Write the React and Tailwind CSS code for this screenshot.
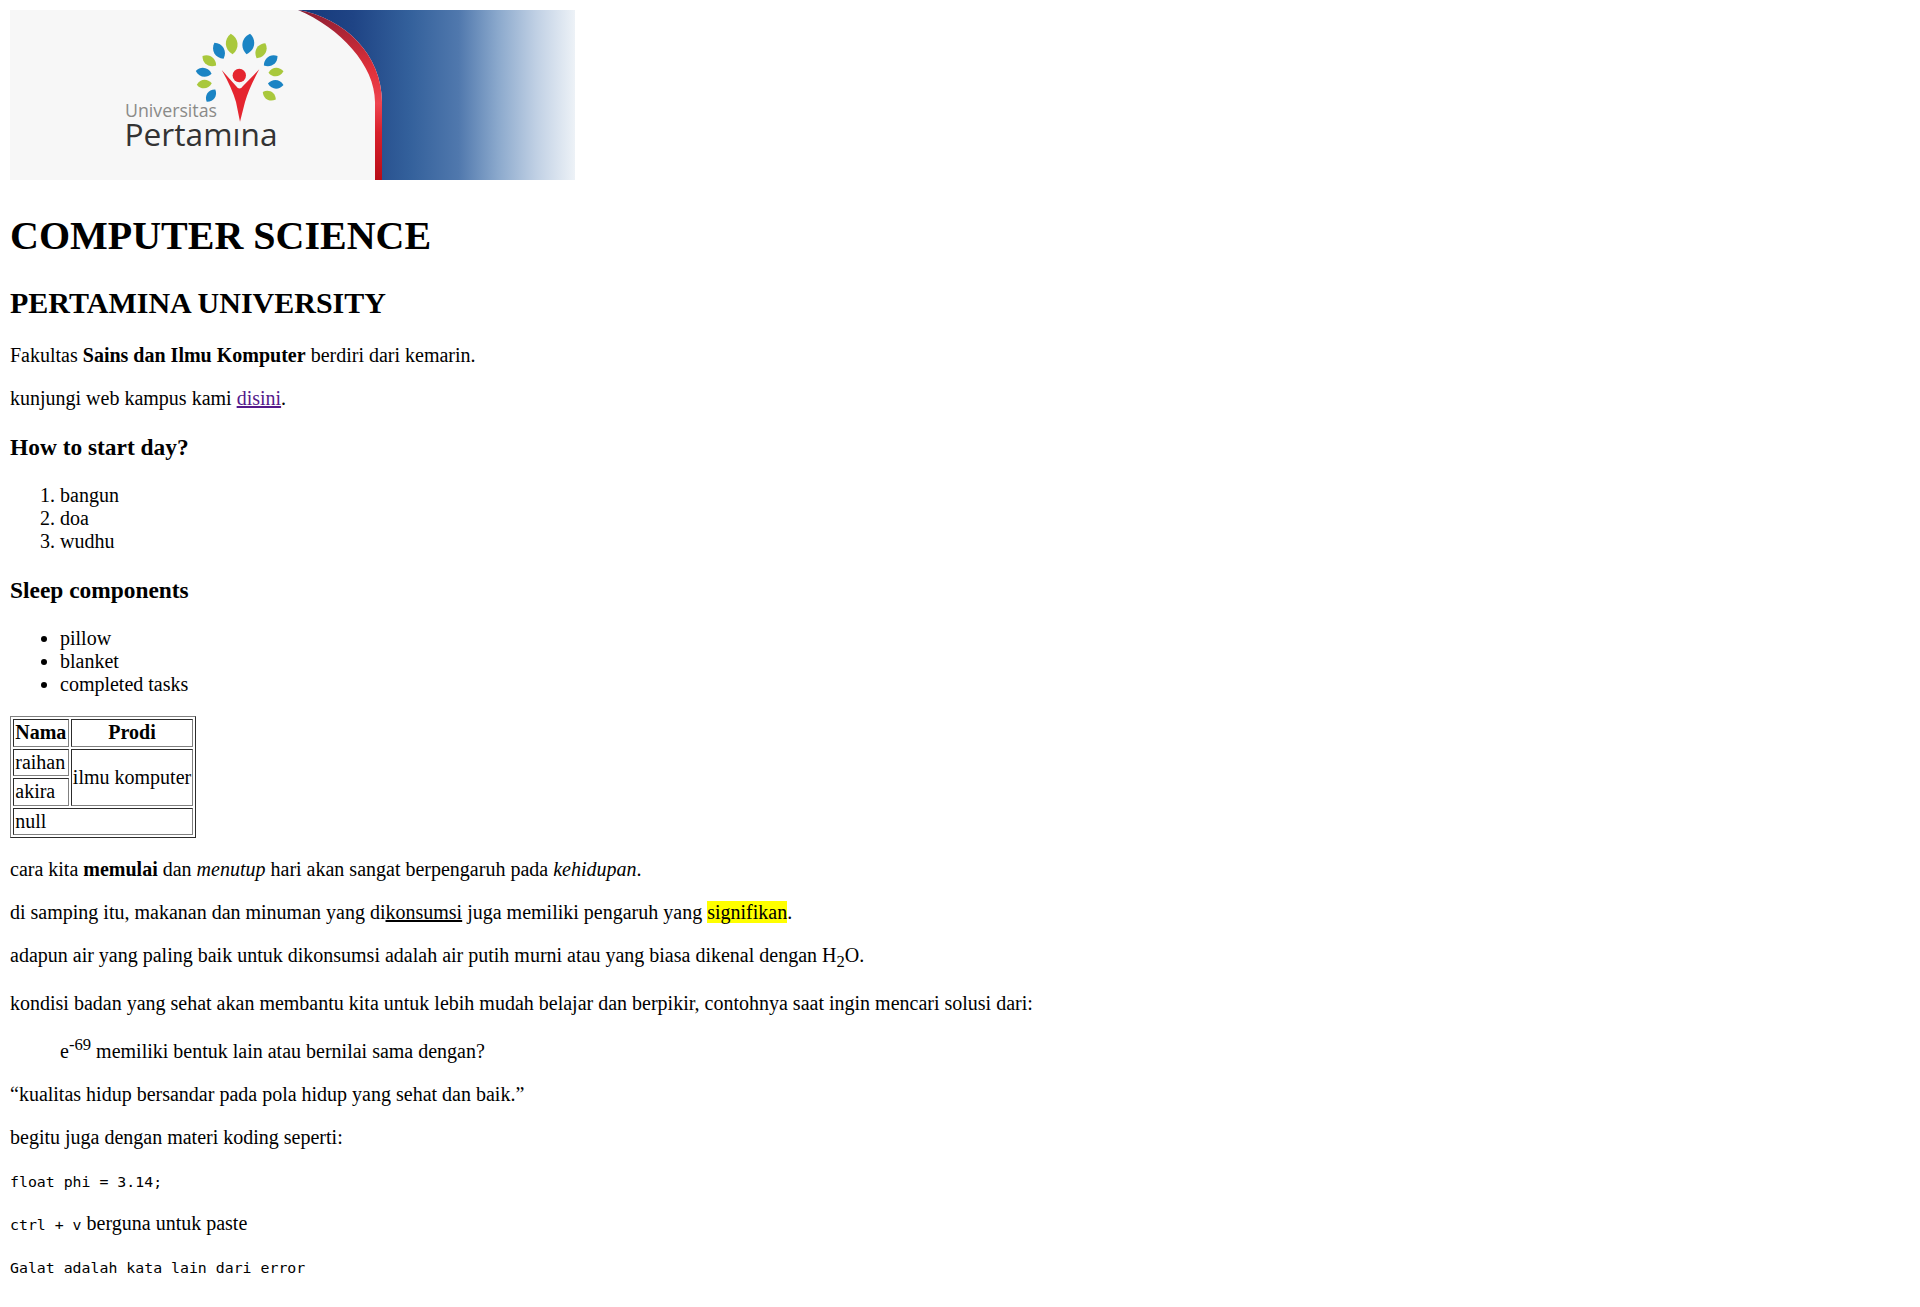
const leaves = [
  { x: 209, y: 40.7, r: -30, c: "#1b84c4", w: 7.1, h: 9.2 },
  { x: 221.7, y: 34, r: -5, c: "#a9c83c", w: 7.8, h: 10.3 },
  { x: 238.3, y: 34, r: 10, c: "#1b84c4", w: 7.8, h: 10.3 },
  { x: 251, y: 40.7, r: 30, c: "#a9c83c", w: 6.7, h: 8.7 },
  { x: 260.7, y: 50.7, r: 55, c: "#1b84c4", w: 6.2, h: 8.3 },
  { x: 266, y: 62, r: 85, c: "#a9c83c", w: 5.8, h: 7.5 },
  { x: 265.7, y: 74.3, r: 95, c: "#1b84c4", w: 5.8, h: 7.8 },
  { x: 259.3, y: 85.7, r: 120, c: "#a9c83c", w: 5.8, h: 7.5 },
  { x: 201, y: 85.7, r: 35, c: "#1b84c4", w: 5.8, h: 7.5 },
  { x: 194.3, y: 74, r: 85, c: "#a9c83c", w: 5.8, h: 7.5 },
  { x: 193.7, y: 62.3, r: 100, c: "#1b84c4", w: 5.8, h: 8 },
  { x: 199.3, y: 50.7, r: 125, c: "#a9c83c", w: 6.2, h: 8.3 },
];

const Banner = () => {
  return (
    <svg viewBox="0 0 565 170" width="565" height="170" className="inline align-baseline">
      <defs>
        <linearGradient id="blue" x1="0" x2="1" y1="0" y2="0">
          <stop offset="0" stopColor="#15387a" />
          <stop offset="0.2" stopColor="#1f4485" />
          <stop offset="0.4" stopColor="#33609b" />
          <stop offset="0.58" stopColor="#5078ad" />
          <stop offset="0.72" stopColor="#8aa8cc" />
          <stop offset="0.86" stopColor="#c0d0e4" />
          <stop offset="1" stopColor="#edf2f7" />
        </linearGradient>
        <linearGradient id="red" x1="0" x2="0" y1="0" y2="1">
          <stop offset="0" stopColor="#8e1e33" />
          <stop offset="0.35" stopColor="#e0303a" />
          <stop offset="0.55" stopColor="#ee4450" />
          <stop offset="0.72" stopColor="#d8202c" />
          <stop offset="1" stopColor="#b80d18" />
        </linearGradient>
      </defs>
      <rect width="565" height="170" fill="#f7f7f7" />
      <path d="M288 0H565V170H372V92C372 45 335 8 288 0Z" fill="url(#blue)" />
      <path d="M288 0C335 8 372 45 372 92V170H365V92C365 55 330 18 288 0Z" fill="url(#red)" />
      {leaves.map((l, i) => (
        <path
          key={i}
          d={`M0 ${-l.h}C${l.w} ${-l.h * 0.5} ${l.w} ${l.h * 0.5} 0 ${l.h}C${-l.w} ${l.h * 0.5} ${-l.w} ${-l.h * 0.5} 0 ${-l.h}Z`}
          fill={l.c}
          transform={`translate(${l.x} ${l.y}) rotate(${l.r})`}
        />
      ))}
      <circle cx="229.3" cy="65.5" r="6.7" fill="#e5252f" />
      <path d="M211.7 60L226 76Q229.5 81 233 76L249.3 59.3Q239 78 235 92L230 111.7L226 92Q222 78 211.7 60Z" fill="#e5252f" />
      <text x="115" y="107" fontFamily="Open Sans, sans-serif" fontSize="18.5" textLength="92" lengthAdjust="spacingAndGlyphs" fill="#8a8a88">Universitas</text>
      <text x="114.5" y="136" fontFamily="Open Sans, sans-serif" fontSize="31" textLength="153" lengthAdjust="spacingAndGlyphs" fill="#333333">Pertamına</text>
    </svg>
  );
};

const cell = "border border-[#808080] [border-style:inset] p-[1.25px]";
const mono = "font-['DejaVu_Sans_Mono',monospace] text-[14.86px]";

const App = () => {
  return (
    <div className="p-[10px] font-['Liberation_Serif',serif] text-[20px] leading-[normal] text-black bg-white min-h-[1307px]">
      <div>
        <Banner />
      </div>
      <h1 className="text-[40px] font-bold my-[26.8px]">COMPUTER SCIENCE</h1>
      <h2 className="text-[30px] font-bold my-[24.9px]">PERTAMINA UNIVERSITY</h2>
      <p className="my-[20px]">
        Fakultas <b className="font-bold">Sains dan Ilmu Komputer</b> berdiri dari kemarin.
      </p>
      <p className="my-[20px]">
        kunjungi web kampus kami <a href="#" className="text-[#551a8b] underline">disini</a>.
      </p>
      <h3 className="text-[23.4px] font-bold my-[23.4px]">How to start day?</h3>
      <ol className="list-decimal pl-[50px] my-[20px]">
        <li>bangun</li>
        <li>doa</li>
        <li>wudhu</li>
      </ol>
      <h3 className="text-[23.4px] font-bold my-[23.4px]">Sleep components</h3>
      <ul className="list-disc pl-[50px] my-[20px]">
        <li>pillow</li>
        <li>blanket</li>
        <li>completed tasks</li>
      </ul>
      <table className="border-separate border-spacing-[2.5px] border border-[#808080] [border-style:outset]">
        <tbody>
          <tr>
            <th className={cell + " font-bold text-center"}>Nama</th>
            <th className={cell + " font-bold text-center"}>Prodi</th>
          </tr>
          <tr>
            <td className={cell}>raihan</td>
            <td rowSpan={2} className={cell}>ilmu komputer</td>
          </tr>
          <tr>
            <td className={cell}>akira</td>
          </tr>
          <tr>
            <td colSpan={2} className={cell}>null</td>
          </tr>
        </tbody>
      </table>
      <p className="my-[20px]">
        cara kita <b className="font-bold">memulai</b> dan <i>menutup</i> hari akan sangat berpengaruh pada <em>kehidupan</em>.
      </p>
      <p className="my-[20px]">
        di samping itu, makanan dan minuman yang di<u>konsumsi</u> juga memiliki pengaruh yang <mark className="bg-[#ffff00] text-black">signifikan</mark>.
      </p>
      <p className="my-[20px]">
        adapun air yang paling baik untuk dikonsumsi adalah air putih murni atau yang biasa dikenal dengan H<sub className="static align-sub text-[16.67px] leading-[normal]">2</sub>O.
      </p>
      <p className="my-[20px]">
        kondisi badan yang sehat akan membantu kita untuk lebih mudah belajar dan berpikir, contohnya saat ingin mencari solusi dari:
      </p>
      <blockquote className="mx-[50px] my-[20px]">
        e<sup className="static align-super text-[16.67px] leading-[normal]">-69</sup> memiliki bentuk lain atau bernilai sama dengan?
      </blockquote>
      <p className="my-[20px]">“kualitas hidup bersandar pada pola hidup yang sehat dan baik.”</p>
      <p className="my-[20px]">begitu juga dengan materi koding seperti:</p>
      <p className="my-[20px]">
        <code className={mono}>float phi = 3.14;</code>
      </p>
      <p className="my-[20px]">
        <kbd className={mono}>ctrl + v</kbd> berguna untuk paste
      </p>
      <p className="my-[20px]">
        <samp className={mono}>Galat adalah kata lain dari error</samp>
      </p>
    </div>
  );
};

export default App;
